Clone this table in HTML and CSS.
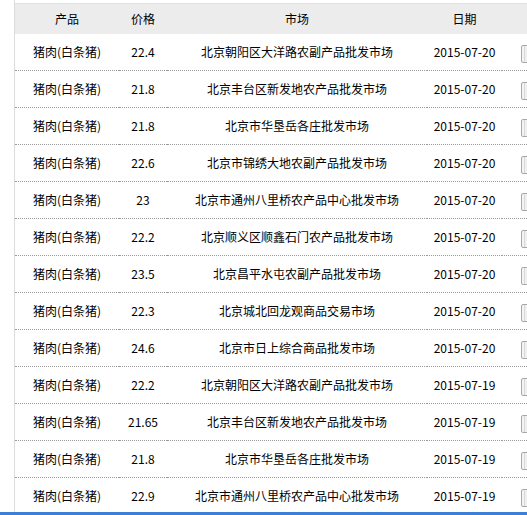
FILE: index.html
```html
<!DOCTYPE html>
<html>
<head>
<meta charset="utf-8">
<link rel="stylesheet" href="styles.css">
</head>
<body>
<div class="wrap">
<table class="grid">
<colgroup><col class="c1"><col class="c2"><col class="c3"><col class="c4"><col class="c5"></colgroup>
<thead>
<tr><th>产品</th><th>价格</th><th>市场</th><th>日期</th><th></th></tr>
</thead>
<tbody>
<tr><td>猪肉(白条猪)</td><td>22.4</td><td>北京朝阳区大洋路农副产品批发市场</td><td>2015-07-20</td><td class="act"><span class="btn"></span></td></tr>
<tr><td>猪肉(白条猪)</td><td>21.8</td><td>北京丰台区新发地农产品批发市场</td><td>2015-07-20</td><td class="act"><span class="btn"></span></td></tr>
<tr><td>猪肉(白条猪)</td><td>21.8</td><td>北京市华垦岳各庄批发市场</td><td>2015-07-20</td><td class="act"><span class="btn"></span></td></tr>
<tr><td>猪肉(白条猪)</td><td>22.6</td><td>北京市锦绣大地农副产品批发市场</td><td>2015-07-20</td><td class="act"><span class="btn"></span></td></tr>
<tr><td>猪肉(白条猪)</td><td>23</td><td>北京市通州八里桥农产品中心批发市场</td><td>2015-07-20</td><td class="act"><span class="btn"></span></td></tr>
<tr><td>猪肉(白条猪)</td><td>22.2</td><td>北京顺义区顺鑫石门农产品批发市场</td><td>2015-07-20</td><td class="act"><span class="btn"></span></td></tr>
<tr><td>猪肉(白条猪)</td><td>23.5</td><td>北京昌平水屯农副产品批发市场</td><td>2015-07-20</td><td class="act"><span class="btn"></span></td></tr>
<tr><td>猪肉(白条猪)</td><td>22.3</td><td>北京城北回龙观商品交易市场</td><td>2015-07-20</td><td class="act"><span class="btn"></span></td></tr>
<tr><td>猪肉(白条猪)</td><td>24.6</td><td>北京市日上综合商品批发市场</td><td>2015-07-20</td><td class="act"><span class="btn"></span></td></tr>
<tr><td>猪肉(白条猪)</td><td>22.2</td><td>北京朝阳区大洋路农副产品批发市场</td><td>2015-07-19</td><td class="act"><span class="btn"></span></td></tr>
<tr><td>猪肉(白条猪)</td><td>21.65</td><td>北京丰台区新发地农产品批发市场</td><td>2015-07-19</td><td class="act"><span class="btn"></span></td></tr>
<tr><td>猪肉(白条猪)</td><td>21.8</td><td>北京市华垦岳各庄批发市场</td><td>2015-07-19</td><td class="act"><span class="btn"></span></td></tr>
<tr><td>猪肉(白条猪)</td><td>22.9</td><td>北京市通州八里桥农产品中心批发市场</td><td>2015-07-19</td><td class="act"><span class="btn"></span></td></tr>
</tbody>
</table>
</div>
<div class="taskbar"></div>
</body>
</html>
```
FILE: styles.css
```css
html, body {
  margin: 0;
  padding: 0;
  background: #fff;
  overflow: hidden;
  height: 515px;
}
body {
  font-family: "Noto Sans CJK SC", "Liberation Sans", sans-serif;
  font-size: 12px;
  color: #000;
}
.wrap {
  margin-left: 14px;
  border-left: 1px solid #dcdcdc;
  padding-top: 3px;
  height: 515px;
  box-sizing: border-box;
  overflow: hidden;
}
.grid {
  border-collapse: collapse;
  table-layout: fixed;
  width: 512px;
  border-top: 1px solid #e2e2e2;
}
.c1 { width: 104px; }
.c2 { width: 48px; }
.c3 { width: 260px; }
.c4 { width: 75px; }
.c5 { width: 25px; }
.grid th {
  background: #ececec;
  font-weight: normal;
  height: 30px;
  padding: 0;
  text-align: center;
  line-height: 30px;
}
.grid td {
  height: 36px;
  padding: 0;
  text-align: center;
  line-height: 36px;
  border-bottom: 1px dotted #9a9a9a;
  white-space: nowrap;
}
.grid td.act {
  text-align: left;
  overflow: hidden;
}
.btn {
  display: inline-block;
  vertical-align: middle;
  margin-left: 19px;
  width: 40px;
  height: 18px;
  border: 1px solid #a8a8a8;
  border-radius: 2px;
  background: linear-gradient(90deg, #f4f4f4 0 2px, #d8d8d8 2px 3px, #f0f0f0 3px);
  box-sizing: border-box;
}
.taskbar {
  position: fixed;
  left: 0;
  right: 0;
  bottom: 0;
  height: 3px;
  background: #3b7fd9;
}
```
